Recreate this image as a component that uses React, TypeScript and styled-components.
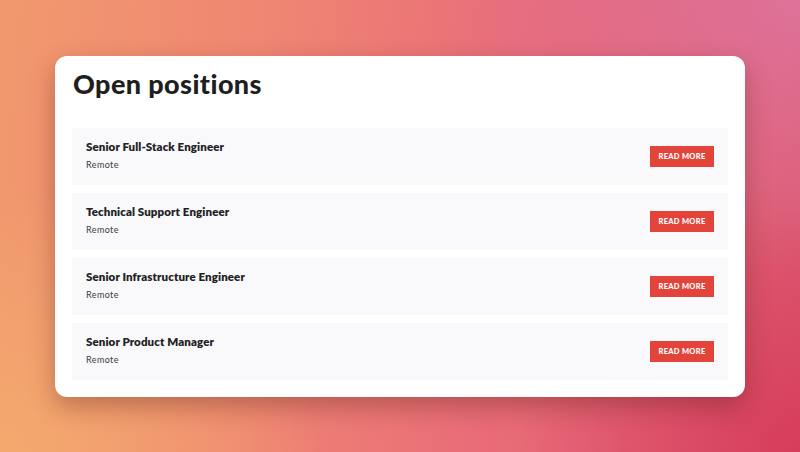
import React from "react";
import styled, { createGlobalStyle } from "styled-components";

const GlobalStyle = createGlobalStyle`
  html, body { margin: 0; padding: 0; }
  body { font-family: Lato, "Liberation Sans", Arial, sans-serif; }
`;

const Page = styled.div`
  width: 100%;
  height: 452px;
  display: flex;
  align-items: center;
  justify-content: center;
  background:
    radial-gradient(ellipse 45% 60% at 100% 0%, rgba(222, 118, 160, 0.85) 0%, rgba(222, 118, 160, 0) 100%),
    radial-gradient(ellipse 40% 60% at 0% 100%, rgba(244, 172, 110, 0.9) 0%, rgba(244, 172, 110, 0) 100%),
    radial-gradient(ellipse 35% 60% at 100% 100%, rgba(214, 58, 88, 0.9) 0%, rgba(214, 58, 88, 0) 100%),
    linear-gradient(95deg, #f1996e 0%, #ef8872 30%, #e96c78 62%, #dc5a72 100%);
`;

const Card = styled.section`
  width: 690px;
  height: 341px;
  box-sizing: border-box;
  background: #ffffff;
  border-radius: 12px;
  padding: 11px 17px 17px;
  display: flex;
  flex-direction: column;
  box-shadow: 0 10px 24px rgba(90, 30, 20, 0.35);
`;

const Title = styled.h1`
  margin: 0 0 0 1px;
  font-family: Lato, "Liberation Sans", sans-serif;
  font-weight: 900;
  font-size: 27px;
  line-height: 34px;
  color: #1f1f22;
  letter-spacing: 0.4px;
`;

const List = styled.div`
  margin-top: 27px;
  display: flex;
  flex-direction: column;
  gap: 8px;
`;

const Row = styled.div`
  height: 57px;
  box-sizing: border-box;
  background: #f9f9fb;
  display: flex;
  align-items: center;
  justify-content: space-between;
  padding: 0 14px;
`;

const Info = styled.div`
  display: flex;
  flex-direction: column;
  gap: 5px;
  padding-bottom: 2px;
`;

const JobTitle = styled.div`
  font-family: Lato, "Liberation Sans", sans-serif;
  font-weight: 800;
  font-size: 11.5px;
  line-height: 14px;
  color: #222226;
  letter-spacing: 0.1px;
`;

const Location = styled.div`
  font-family: Lato, "Liberation Sans", sans-serif;
  font-weight: 400;
  font-size: 9px;
  line-height: 11px;
  color: #3a3a3e;
  letter-spacing: 0.4px;
`;

const Button = styled.button`
  width: 64px;
  height: 21px;
  border: none;
  border-radius: 0;
  background: #e3443a;
  color: #ffffff;
  font-family: Lato, "Liberation Sans", sans-serif;
  font-weight: 900;
  font-size: 7.5px;
  letter-spacing: 0.3px;
  padding: 0;
  cursor: pointer;
`;

const jobs = [
  "Senior Full-Stack Engineer",
  "Technical Support Engineer",
  "Senior Infrastructure Engineer",
  "Senior Product Manager",
];

export default function App() {
  return (
    <>
      <GlobalStyle />
      <Page>
        <Card>
          <Title>Open positions</Title>
          <List>
            {jobs.map((j) => (
              <Row key={j}>
                <Info>
                  <JobTitle>{j}</JobTitle>
                  <Location>Remote</Location>
                </Info>
                <Button>READ MORE</Button>
              </Row>
            ))}
          </List>
        </Card>
      </Page>
    </>
  );
}
